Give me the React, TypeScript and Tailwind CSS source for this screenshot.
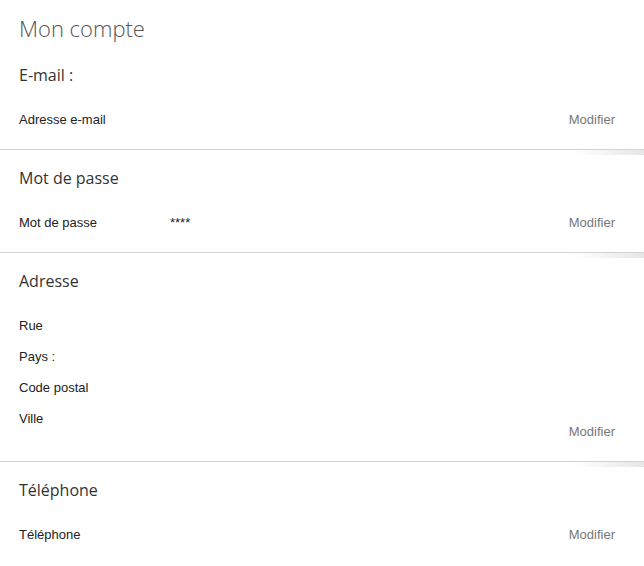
import React from "react";

const Divider = () => (
  <div className="relative h-px bg-[#d3d3d3]">
    <div className="absolute right-0 top-px h-[5px] w-[70px] bg-gradient-to-r from-transparent to-[#e6e6e6]" />
  </div>
);

const Row = ({ label, value }: { label: string; value?: string }) => (
  <div className="flex h-5 items-center text-[13px] leading-5 text-[#222]">
    <span className="w-[151px]">{label}</span>
    {value && <span>{value}</span>}
  </div>
);

const Modifier = () => (
  <button className="text-[13px] leading-5 text-[#777]">Modifier</button>
);

const Heading = ({ children }: { children: React.ReactNode }) => (
  <h2 className="text-[16px] leading-6 text-[#333]" style={{ fontFamily: '"Open Sans", sans-serif' }}>
    {children}
  </h2>
);

export default function App() {
  return (
    <div className="min-h-[566px] bg-white" style={{ fontFamily: '"Liberation Sans", Arial, sans-serif' }}>
      <section className="pl-[19px] pr-[29px] pt-[13px] pb-[19px]">
        <h1 className="text-[22px] font-light leading-[30px] text-[#555]" style={{ fontFamily: '"Open Sans", sans-serif' }}>
          Mon compte
        </h1>
        <div className="mt-[20px]">
          <Heading>E-mail :</Heading>
        </div>
        <div className="mt-[23px] flex items-center justify-between">
          <Row label="Adresse e-mail" />
          <Modifier />
        </div>
      </section>
      <Divider />

      <section className="pl-[19px] pr-[29px] pt-[16px] pb-[19px]">
        <Heading>Mot de passe</Heading>
        <div className="mt-[23px] flex items-center justify-between">
          <Row label="Mot de passe" value="****" />
          <Modifier />
        </div>
      </section>
      <Divider />

      <section className="pl-[19px] pr-[29px] pt-[16px] pb-[19px]">
        <Heading>Adresse</Heading>
        <div className="mt-[23px] flex items-end justify-between">
          <div className="mb-[13px] flex flex-col gap-[11px]">
            <Row label="Rue" />
            <Row label="Pays :" />
            <Row label="Code postal" />
            <Row label="Ville" />
          </div>
          <Modifier />
        </div>
      </section>
      <Divider />

      <section className="pl-[19px] pr-[29px] pt-[16px] pb-[19px]">
        <Heading>Téléphone</Heading>
        <div className="mt-[23px] flex items-center justify-between">
          <Row label="Téléphone" />
          <Modifier />
        </div>
      </section>
    </div>
  );
}
